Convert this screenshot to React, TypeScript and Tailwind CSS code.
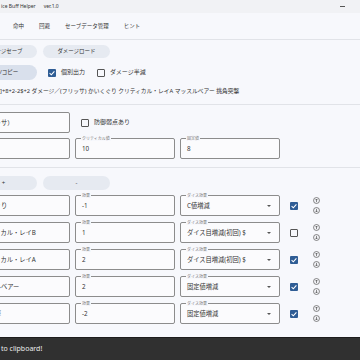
import React from "react"

const buffs = [
  { name: "かいくぐり", effect: "-1", dice: "C値増減", on: true },
  { name: "クリティカル・レイB", effect: "1", dice: "ダイス目増減(初回) $", on: false },
  { name: "クリティカル・レイA", effect: "2", dice: "ダイス目増減(初回) $", on: true },
  { name: "マッスルベアー", effect: "2", dice: "固定値増減", on: true },
  { name: "挑角突撃", effect: "-2", dice: "固定値増減", on: true },
]

function Check({ on }: { on: boolean }) {
  if (!on) return <span className="block h-[8px] w-[8px] shrink-0 rounded-[1px] border border-[#555]" />
  return (
    <span className="flex h-[8px] w-[8px] shrink-0 items-center justify-center rounded-[1px] bg-[#2f5d95]">
      <svg viewBox="0 0 8 8" className="h-[8px] w-[8px]">
        <path d="M1.6 4.2 L3.3 5.8 L6.4 2.4" fill="none" stroke="#fff" strokeWidth="1.1" />
      </svg>
    </span>
  )
}

function Field({ label, value, name }: { label?: string; value?: string; name?: boolean }) {
  return (
    <div
      className={`relative flex h-[21px] w-[100px] shrink-0 items-center rounded-[2px] border border-[#8c8c8c] bg-[#fbfbfd] text-[6.25px] text-[#333] ${
        name ? "pl-[5px]" : "pl-[6px]"
      }`}
    >
      {label && (
        <span className="absolute -top-[3px] left-[5px] bg-[#f7f8fc] px-[1px] text-[4px] leading-[5px] text-[#777]">
          {label}
        </span>
      )}
      <span className="whitespace-nowrap">{value}</span>
    </div>
  )
}

function Select({ value }: { value: string }) {
  return (
    <div className="relative flex h-[21px] w-[100px] shrink-0 items-center justify-between rounded-[2px] border border-[#8c8c8c] bg-[#fbfbfd] pl-[6px] pr-[8px] text-[6.25px] text-[#333]">
      <span className="absolute -top-[3px] left-[5px] bg-[#f7f8fc] px-[1px] text-[4px] leading-[5px] text-[#777]">
        ダイス効果
      </span>
      <span className="whitespace-nowrap">{value}</span>
      <svg viewBox="0 0 4 2" className="h-[2px] w-[4px]">
        <path d="M0 0 L4 0 L2 2 Z" fill="#555" />
      </svg>
    </div>
  )
}

function Arrows() {
  return (
    <div className="ml-[15px] flex flex-col gap-[3px]">
      <svg viewBox="0 0 8 8" className="h-[7px] w-[7px]">
        <circle cx="4" cy="4" r="3.4" fill="none" stroke="#555" strokeWidth="0.8" />
        <path d="M4 5.9V2.3M2.6 3.7L4 2.3L5.4 3.7" fill="none" stroke="#555" strokeWidth="0.8" />
      </svg>
      <svg viewBox="0 0 8 8" className="h-[7px] w-[7px]">
        <circle cx="4" cy="4" r="3.4" fill="none" stroke="#555" strokeWidth="0.8" />
        <path d="M4 2.1V5.7M2.6 4.3L4 5.7L5.4 4.3" fill="none" stroke="#555" strokeWidth="0.8" />
      </svg>
    </div>
  )
}

export default function App() {
  return (
    <div className="relative h-[360px] w-[360px] overflow-hidden bg-[#f7f8fc] font-['Noto_Sans','Noto_Sans_CJK_JP',sans-serif] text-[#333]">
      {/* タイトルバー */}
      <div className="flex h-[13px] items-center bg-[#f1f2f5] text-[5px]">
        <span className="pl-[1px]">ice Buff Helper</span>
        <span className="ml-[8px]">ver.1.0</span>
        <span className="ml-auto mr-[15px] h-px w-[5px] bg-[#555]" />
      </div>

      {/* タブ */}
      <div className="flex h-[27px] items-center gap-[15px] border-b border-[#e1e3e8] pl-[13px] text-[5.5px]">
        <span>命中</span>
        <span>回避</span>
        <span>セーブデータ管理</span>
        <span>ヒント</span>
      </div>

      <div className="-ml-[30px] flex w-[390px] flex-col">
        <div className="mt-[5px] flex h-[13px] gap-[6px] text-[5.5px]">
          <button className="w-[67px] rounded-full bg-[#e6eaf1]">ダメージセーブ</button>
          <button className="w-[67px] rounded-full bg-[#e6eaf1]">ダメージロード</button>
        </div>

        <div className="mt-[7px] flex h-[15px] items-center text-[6px]">
          <button className="h-full w-[67px] rounded-full bg-[#d9e0ec] text-[5.5px]">出力/コピー</button>
          <span className="ml-[11px]"><Check on /></span>
          <span className="ml-[5px]">個別出力</span>
          <span className="ml-[12px]"><Check on={false} /></span>
          <span className="ml-[5px]">ダメージ半減</span>
        </div>

        <div className="mt-[6px] h-[10px] whitespace-nowrap pl-[30px] text-[5.75px] leading-[10px]">
          ]+8+2-2$+2 ダメージ／(フリッサ) かいくぐり クリティカル・レイA マッスルベアー 挑角突撃
        </div>

        <div className="mt-[8px] h-px bg-[#e1e3e8]" />

        <div className="mt-[7px] flex items-center">
          <Field name value="（フリッサ）" />
          <span className="ml-[11px]"><Check on={false} /></span>
          <span className="ml-[5px] text-[6px]">防御弱点あり</span>
        </div>

        <div className="mt-[5px] flex gap-[5px]">
          <Field name />
          <Field label="クリティカル値" value="10" />
          <Field label="固定値" value="8" />
        </div>

        <div className="mt-[8px] h-px bg-[#e1e3e8]" />

        <div className="mt-[8px] flex h-[14px] gap-[6px] text-[6px]">
          <button className="w-[67px] rounded-full bg-[#e6eaf1]">+</button>
          <button className="w-[67px] rounded-full bg-[#e6eaf1]">-</button>
        </div>

        <div className="mt-[5px] flex flex-col gap-[6px]">
          {buffs.map((b) => (
            <div key={b.name} className="flex items-center">
              <Field name value={b.name} />
              <div className="ml-[5px]">
                <Field label="効果" value={b.effect} />
              </div>
              <div className="ml-[5px]">
                <Select value={b.dice} />
              </div>
              <span className="ml-[10px]"><Check on={b.on} /></span>
              <Arrows />
            </div>
          ))}
        </div>
      </div>

      {/* スナックバー */}
      <div className="absolute bottom-0 left-0 right-0 flex h-[23px] items-center border-t border-[#1d1d1d] bg-[#303030] pl-[1px] text-[7px] text-[#ececec]">
        to clipboard!
      </div>
    </div>
  )
}
